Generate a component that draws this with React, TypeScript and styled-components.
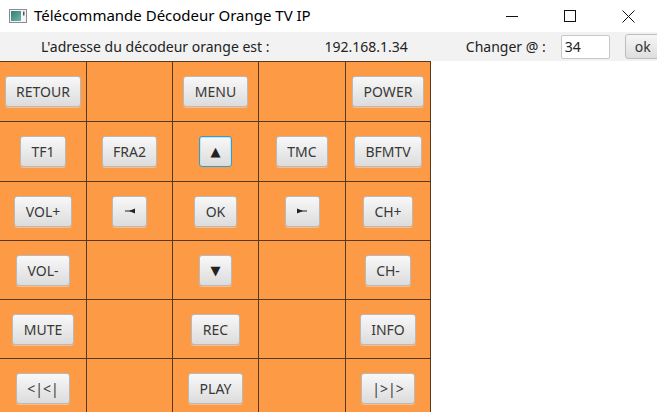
import React from "react";
import styled, { createGlobalStyle } from "styled-components";

const Global = createGlobalStyle`
  html, body {
    margin: 0;
    padding: 0;
    background: #ffffff;
  }
  body {
    font-family: "Noto Sans", "Open Sans", sans-serif;
  }
`;

const Window = styled.div`
  width: 657px;
  height: 412px;
  overflow: hidden;
  background: #ffffff;
  display: flex;
  flex-direction: column;
`;

const TitleBar = styled.div`
  height: 32px;
  display: flex;
  align-items: center;
  padding-left: 9px;
  background: #ffffff;
  flex-shrink: 0;
`;

const Title = styled.span`
  margin-left: 7px;
  font-size: 15px;
  color: #000;
  margin-top: -2px;
`;

const WinControls = styled.div`
  margin-left: auto;
  display: flex;
  height: 100%;
`;

const WinButton = styled.div`
  width: 58px;
  height: 100%;
  display: flex;
  align-items: center;
  justify-content: center;
`;

const HeaderBar = styled.div`
  height: 29px;
  background: #f2f2f2;
  display: flex;
  align-items: center;
  font-size: 14px;
  color: #222;
  flex-shrink: 0;
  overflow: hidden;
`;

const Label = styled.span<{ $left: number }>`
  margin-left: ${(p) => p.$left}px;
  white-space: nowrap;
`;

const Field = styled.input`
  box-sizing: border-box;
  margin-left: 15px;
  width: 49px;
  height: 24px;
  border: 1px solid #c8c8c8;
  border-radius: 2px;
  background: #fff;
  font: inherit;
  font-size: 14px;
  color: #222;
  padding: 0 3px;
  outline: none;
  flex-shrink: 0;
`;

const SmallButton = styled.button`
  box-sizing: border-box;
  margin-left: 15px;
  height: 25px;
  padding: 0 14px 0 9px;
  border: 1px solid #bcbcbc;
  border-radius: 3px;
  background: linear-gradient(#f6f6f6, #dedede);
  font: inherit;
  font-size: 14px;
  color: #333;
  flex-shrink: 0;
`;

const Pad = styled.div`
  display: grid;
  grid-template-columns: 86px 85px 85px 86px 84px;
  grid-template-rows: 59px 59px 58px 58px 58px 58px;
  gap: 1px;
  width: max-content;
  background: #55391e;
  padding: 1px 1px 0 0;
`;

const Cell = styled.div`
  background: #fd9a46;
  display: flex;
  align-items: center;
  justify-content: center;
`;

const Key = styled.button<{ $focused?: boolean }>`
  box-sizing: border-box;
  height: 31px;
  min-width: 33px;
  padding: 0 10.5px;
  border: 1px solid ${(p) => (p.$focused ? "#3c9bc4" : "#b9b9b9")};
  border-radius: 3px;
  background: linear-gradient(#f8f8f8, #dcdcdc);
  box-shadow: ${(p) =>
    p.$focused
      ? "inset 0 0 0 1px #bfe3f2"
      : "0 1px 0 rgba(255,255,255,0.35)"};
  font-family: "Noto Sans", "Open Sans", sans-serif;
  font-size: 14px;
  color: #383838;
  display: flex;
  align-items: center;
  justify-content: center;
`;

const Glyph = styled.span`
  font-family: "DejaVu Sans", sans-serif;
  font-size: 13px;
  line-height: 1;
  color: #222;
`;

const AppIcon = () => (
  <svg width="18" height="14" viewBox="0 0 18 14">
    <defs>
      <linearGradient id="ic" x1="0" y1="0" x2="1" y2="1">
        <stop offset="0" stopColor="#2f7f6f" />
        <stop offset="1" stopColor="#6fb7a8" />
      </linearGradient>
    </defs>
    <rect x="0.5" y="0.5" width="17" height="13" fill="#f4f4f4" stroke="#8c8c8c" />
    <rect x="2" y="2" width="10" height="10" fill="url(#ic)" />
    <rect x="14" y="2.5" width="1.5" height="4" fill="#555" />
  </svg>
);

const SideArrow = ({ dir }: { dir: "left" | "right" }) => (
  <svg width="12" height="8" viewBox="0 0 12 8">
    {dir === "left" ? (
      <>
        <line x1="1" y1="4" x2="7" y2="4" stroke="#222" strokeWidth="1" />
        <polygon points="5,4 11,1.5 11,6.5" fill="#222" />
      </>
    ) : (
      <>
        <polygon points="1,1.5 1,6.5 7,4" fill="#222" />
        <line x1="5" y1="4" x2="11" y2="4" stroke="#222" strokeWidth="1" />
      </>
    )}
  </svg>
);

type KeyDef = { label?: string; node?: React.ReactNode; focused?: boolean } | null;

const rows: KeyDef[][] = [
  [{ label: "RETOUR" }, null, { label: "MENU" }, null, { label: "POWER" }],
  [
    { label: "TF1" },
    { label: "FRA2" },
    { node: <Glyph>▲</Glyph>, focused: true },
    { label: "TMC" },
    { label: "BFMTV" },
  ],
  [
    { label: "VOL+" },
    { node: <SideArrow dir="left" /> },
    { label: "OK" },
    { node: <SideArrow dir="right" /> },
    { label: "CH+" },
  ],
  [{ label: "VOL-" }, null, { node: <Glyph>▼</Glyph> }, null, { label: "CH-" }],
  [{ label: "MUTE" }, null, { label: "REC" }, null, { label: "INFO" }],
  [{ label: "<|<|" }, null, { label: "PLAY" }, null, { label: "|>|>" }],
];

export default function App() {
  return (
    <>
      <Global />
      <Window>
        <TitleBar>
          <AppIcon />
          <Title>Télécommande Décodeur Orange TV IP</Title>
          <WinControls>
            <WinButton>
              <svg width="12" height="12" viewBox="0 0 12 12">
                <line x1="0" y1="6.5" x2="12" y2="6.5" stroke="#111" strokeWidth="1" />
              </svg>
            </WinButton>
            <WinButton>
              <svg width="12" height="12" viewBox="0 0 12 12">
                <rect x="0.5" y="0.5" width="11" height="11" fill="none" stroke="#111" strokeWidth="1" />
              </svg>
            </WinButton>
            <WinButton>
              <svg width="13" height="13" viewBox="0 0 13 13">
                <path d="M0.5 0.5 L12.5 12.5 M12.5 0.5 L0.5 12.5" stroke="#111" strokeWidth="1" />
              </svg>
            </WinButton>
          </WinControls>
        </TitleBar>
        <HeaderBar>
          <Label $left={41}>L'adresse du décodeur orange est :</Label>
          <Label $left={55}>192.168.1.34</Label>
          <Label $left={58}>Changer @ :</Label>
          <Field defaultValue="34" />
          <SmallButton>ok</SmallButton>
        </HeaderBar>
        <Pad>
          {rows.map((row, r) =>
            row.map((k, c) => (
              <Cell key={`${r}-${c}`}>
                {k && <Key $focused={k.focused}>{k.node ?? k.label}</Key>}
              </Cell>
            ))
          )}
        </Pad>
      </Window>
    </>
  );
}
